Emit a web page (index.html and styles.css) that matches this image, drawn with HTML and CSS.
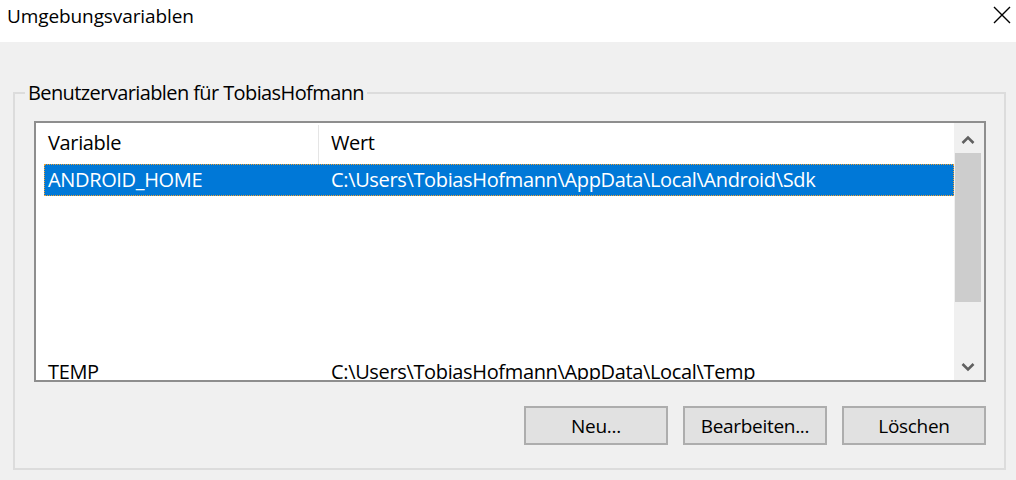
FILE: index.html
```html
<!DOCTYPE html>
<html lang="de">

<head>
    <meta charset="UTF-8">
    <meta name="viewport" content="width=device-width, initial-scale=1.0">
    <title>Umgebungsvariablen</title>
    <link rel="stylesheet" href="styles.css">
</head>

<body>
    <div class="win">
        <div class="titlebar">
            <span class="title">Umgebungsvariablen</span>
            <svg class="close" width="18" height="18" viewBox="0 0 18 18">
                <path d="M1 1 L17 17 M17 1 L1 17" stroke="#000" stroke-width="1.4" fill="none" />
            </svg>
        </div>
        <div class="body">
            <fieldset class="group">
                <legend>Benutzervariablen für TobiasHofmann</legend>
                <div class="list">
                    <div class="list-main">
                        <div class="head">
                            <div class="hcell">Variable</div>
                            <div class="hcell">Wert</div>
                        </div>
                        <div class="row sel">
                            <div class="cell">ANDROID_HOME</div>
                            <div class="cell">C:\Users\TobiasHofmann\AppData\Local\Android\Sdk</div>
                        </div>
                        <div class="row"></div>
                        <div class="row"></div>
                        <div class="row"></div>
                        <div class="row"></div>
                        <div class="row"></div>
                        <div class="row">
                            <div class="cell">TEMP</div>
                            <div class="cell">C:\Users\TobiasHofmann\AppData\Local\Temp</div>
                        </div>
                    </div>
                    <div class="sbar">
                        <svg class="arrow" width="14" height="10" viewBox="0 0 14 10">
                            <path d="M1.5 8 L7 2.5 L12.5 8" stroke="#606060" stroke-width="2.6" fill="none" />
                        </svg>
                        <div class="thumb"></div>
                        <div class="track"></div>
                        <svg class="arrow" width="14" height="10" viewBox="0 0 14 10">
                            <path d="M1.5 2 L7 7.5 L12.5 2" stroke="#606060" stroke-width="2.6" fill="none" />
                        </svg>
                    </div>
                </div>
                <div class="buttons">
                    <button class="btn">Neu...</button>
                    <button class="btn">Bearbeiten...</button>
                    <button class="btn">Löschen</button>
                </div>
            </fieldset>
        </div>
    </div>
</body>

</html>
```

FILE: styles.css
```css
* {
    margin: 0;
    padding: 0;
    box-sizing: border-box;
    font-family: "Open Sans", sans-serif;
}

body {
    background-color: #f0f0f0;
    color: #000;
}

.win {
    width: 1016px;
    height: 480px;
    overflow: hidden;
}

.titlebar {
    height: 42px;
    background-color: #fff;
    display: flex;
    justify-content: space-between;
    align-items: flex-start;
}

.title {
    font-size: 19px;
    line-height: 24px;
    margin-left: 7px;
    margin-top: 4px;
    letter-spacing: -0.1px;
}

.close {
    margin-top: 6px;
    margin-right: 5px;
}

.body {
    padding: 37px 10px 10px 13px;
}

.group {
    border: 2px solid #dcdcdc;
    padding: 0 18px 23px 19px;
    height: 391px;
}

.group>legend {
    font-size: 20px;
    line-height: 28px;
    padding: 0 3px;
    margin-left: -9px;
    letter-spacing: -0.6px;
}

.list {
    margin-top: 14px;
    height: 261px;
    border: 2px solid #8e8e8e;
    background-color: #fff;
    display: flex;
}

.list-main {
    flex: 1;
    overflow: hidden;
}

.head {
    display: grid;
    grid-template-columns: 283px 1fr;
    height: 41px;
}

.hcell {
    font-size: 20px;
    line-height: 40px;
    padding-left: 12px;
    letter-spacing: -0.35px;
}

.hcell:first-child {
    border-right: 1px solid #e5e5e5;
    margin-top: 2px;
    line-height: 36px;
}

.row {
    display: grid;
    grid-template-columns: 283px 1fr;
    height: 32px;
    margin-left: 8px;
}

.cell {
    font-size: 20px;
    line-height: 32px;
    padding-left: 4px;
    white-space: nowrap;
    letter-spacing: -0.35px;
}

.sel {
    background-color: #0078d7;
    color: #fff;
    outline: 1px dotted #f0a030;
    outline-offset: -1px;
}

.sbar {
    width: 30px;
    background-color: #f0f0f0;
    display: flex;
    flex-direction: column;
    align-items: center;
    padding: 0 3px 0 1px;
}

.arrow {
    margin: 12px 0 8px;
    flex-shrink: 0;
}

.thumb {
    width: 100%;
    height: 149px;
    background-color: #cdcdcd;
}

.track {
    flex: 1;
}

.sbar .arrow:last-child {
    margin: 0 0 8px;
}

.buttons {
    display: flex;
    justify-content: flex-end;
    gap: 15px;
    margin-top: 24px;
}

.btn {
    width: 144px;
    height: 39px;
    background-color: #e1e1e1;
    border: 2px solid #adadad;
    font-size: 19px;
    letter-spacing: -0.3px;
    color: #000;
}
```
